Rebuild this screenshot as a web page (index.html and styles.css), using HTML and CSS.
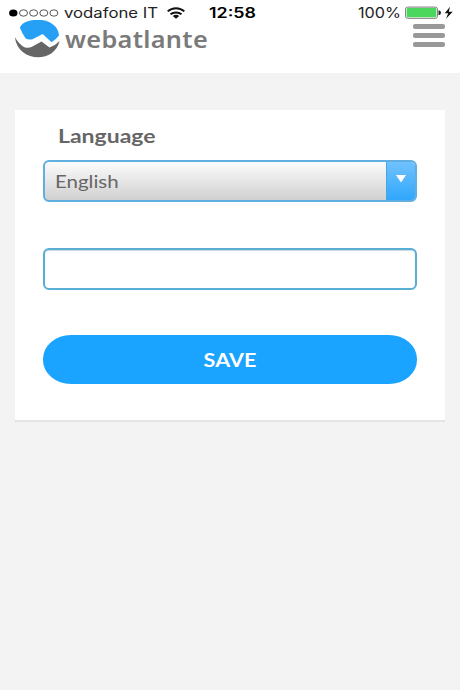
FILE: index.html
```html
<!DOCTYPE html>
<html lang="en">
<head>
<meta charset="utf-8">
<title>webatlante</title>
<link rel="stylesheet" href="styles.css">
</head>
<body>
<header class="header">
  <div class="status">
    <svg class="signal" width="50" height="12" viewBox="0 0 50 12">
      <ellipse cx="4.3" cy="6" rx="4.2" ry="3.5" fill="#000"/>
      <g fill="none" stroke="#444" stroke-width=".9"><ellipse cx="14.5" cy="6" rx="4" ry="3.2"/><ellipse cx="24.6" cy="6" rx="4" ry="3.2"/><ellipse cx="34.8" cy="6" rx="4" ry="3.2"/><ellipse cx="44.9" cy="6" rx="4" ry="3.2"/></g>
    </svg>
    <svg class="carrier" width="96" height="20"><text x="0" y="15" textLength="94" lengthAdjust="spacingAndGlyphs">vodafone IT</text></svg>
    <svg class="wifi" width="18" height="12" viewBox="0 0 18 12">
      <g fill="none" stroke="#111" stroke-width="2"><path d="M.7 4.4C5.2.1 12.8.1 17.3 4.4"/><path d="M3.5 7.3c3-2.5 8-2.500 11 0"/></g>
      <path d="M5.8 9c1.8-1.6 4.6-1.6 6.4 0L9 11.800z" fill="#111"/>
    </svg>
    <svg class="clock" width="49" height="20"><text x="0" y="15" textLength="47" lengthAdjust="spacingAndGlyphs">12:58</text></svg>
    <svg class="percent" width="44" height="20"><text x="0" y="15" textLength="43" lengthAdjust="spacingAndGlyphs">100%</text></svg>
    <svg class="battery" width="48" height="14" viewBox="0 0 48 14">
      <rect x=".6" y="1.1" width="31.8" height="11.2" rx="2" fill="#fff" stroke="#777" stroke-width="1"/>
      <rect x="1.7" y="2.1" width="29.6" height="9.2" rx="1" fill="#4bd75e"/>
      <path d="M33.500 4.200q2.500.4 2.500 2.500t-2.500 2.500z" fill="#222"/>
      <path d="M45 .8 39.800 7.300h3.400L41 12.800 47.700 5.800h-3.900z" fill="#111"/>
    </svg>
  </div>
  <div class="brandbar">
    <svg class="logo" width="196" height="40" viewBox="0 0 196 40" role="img" aria-label="webatlante">
      <path d="M5.800 7.500Q8 3 13 1.400C23-1.500 33-.5 39 4.500Q44.500 8.500 45 15.500 41.500 20 37.500 22.200L28.700 14 18.500 19.200Q14 20.200 11.500 18.200Q8 13 5.800 7.500z" fill="#26a0f5"/>
      <path d="M.8 17Q5 24.500 10.500 27.200 14 28.500 17.500 27L27.500 21.500 35.500 27.500Q41.500 25.500 45.500 21C41 43.500 4 43 .8 17z" fill="#666"/>
      <text class="wordmark" x="51" y="28" textLength="143" lengthAdjust="spacingAndGlyphs">webatlante</text>
    </svg>
    <div class="menu"><i></i><i></i><i></i></div>
  </div>
</header>
<main class="card">
  <div class="label"><span>Language</span></div>
  <div class="select">
    <span class="value">English</span>
    <div class="arrow"><svg width="10" height="8" viewBox="0 0 10 8"><path d="M0 0h10L5 7.500z" fill="#fff"/></svg></div>
  </div>
  <input class="field" type="text">
  <button class="save"><span>SAVE</span></button>
</main>
</body>
</html>
```
FILE: styles.css
```css
* { box-sizing: border-box; }
body { margin: 0; min-height: 690px; background: #f3f3f3; font-family: Lato, sans-serif; color: #666; }
.header { height: 73px; background: #fff; }
.status { height: 20px; display: flex; align-items: flex-start; padding: 3px 7px 0 9px; font-family: Inter, sans-serif; }
.status svg { flex: none; display: block; }
.status text { font-size: 14px; fill: #222; }
.signal { margin-top: 3.500px; }
.carrier { margin-left: 5px; }
.wifi { margin: 4px 0 0 7px; }
.clock { margin-left: 24px; }
.status .clock text { font-weight: 600; fill: #000; }
.percent { margin-left: auto; }
.battery { margin: 3px 0 0 3px; }
.brandbar { height: 40px; display: flex; justify-content: space-between; padding: 0 15px 0 14px; }
.wordmark { font: 600 23.500px "Noto Sans", sans-serif; letter-spacing: .3px; fill: #7a7a7a; }
.menu { width: 32px; display: flex; flex-direction: column; gap: 4px; padding-top: 4px; }
.menu i { height: 5px; border-radius: 2px; background: #999; }
.card { margin: 37px 15px 0; height: 310px; padding: 14px 28px 0; background: #fff; box-shadow: 0 2px 1px #e4e4e4; }
.label { height: 23px; padding-left: 14.500px; font-size: 19px; line-height: 23px; font-weight: 700; }
.label span, .value, .save span { display: inline-block; transform: scaleX(1.15); transform-origin: left; }
.label span { transform: scaleX(1.21); }
.select { margin-top: 13px; height: 42px; display: flex; align-items: center; border: 2px solid #60afe0; border-radius: 6px; padding-left: 9.500px; background: linear-gradient(#fcfcfc, #d0d0d0); font-size: 17.500px; overflow: hidden; }
.value { transform: scaleX(1.17); }
.arrow { margin-left: auto; width: 29px; height: 38px; display: flex; justify-content: center; padding-top: 13px; border-left: 1px solid #4da5df; background: linear-gradient(#70c2ff, #30a7fb); }
.field { display: block; width: 100%; height: 42px; margin-top: 46px; border: 2px solid #59aed5; border-radius: 6px; background: #fff; box-shadow: inset 0 1px 1px #ccd9e2; outline: 0; }
.save { display: block; width: 100%; height: 49px; margin-top: 45px; padding: 1px 0 0; border: 0; border-radius: 28px / 24px; background: #1aa3ff; color: #fff; font: 700 18px Lato, sans-serif; }
.save span { transform: scaleX(1.2); transform-origin: center; }
```
